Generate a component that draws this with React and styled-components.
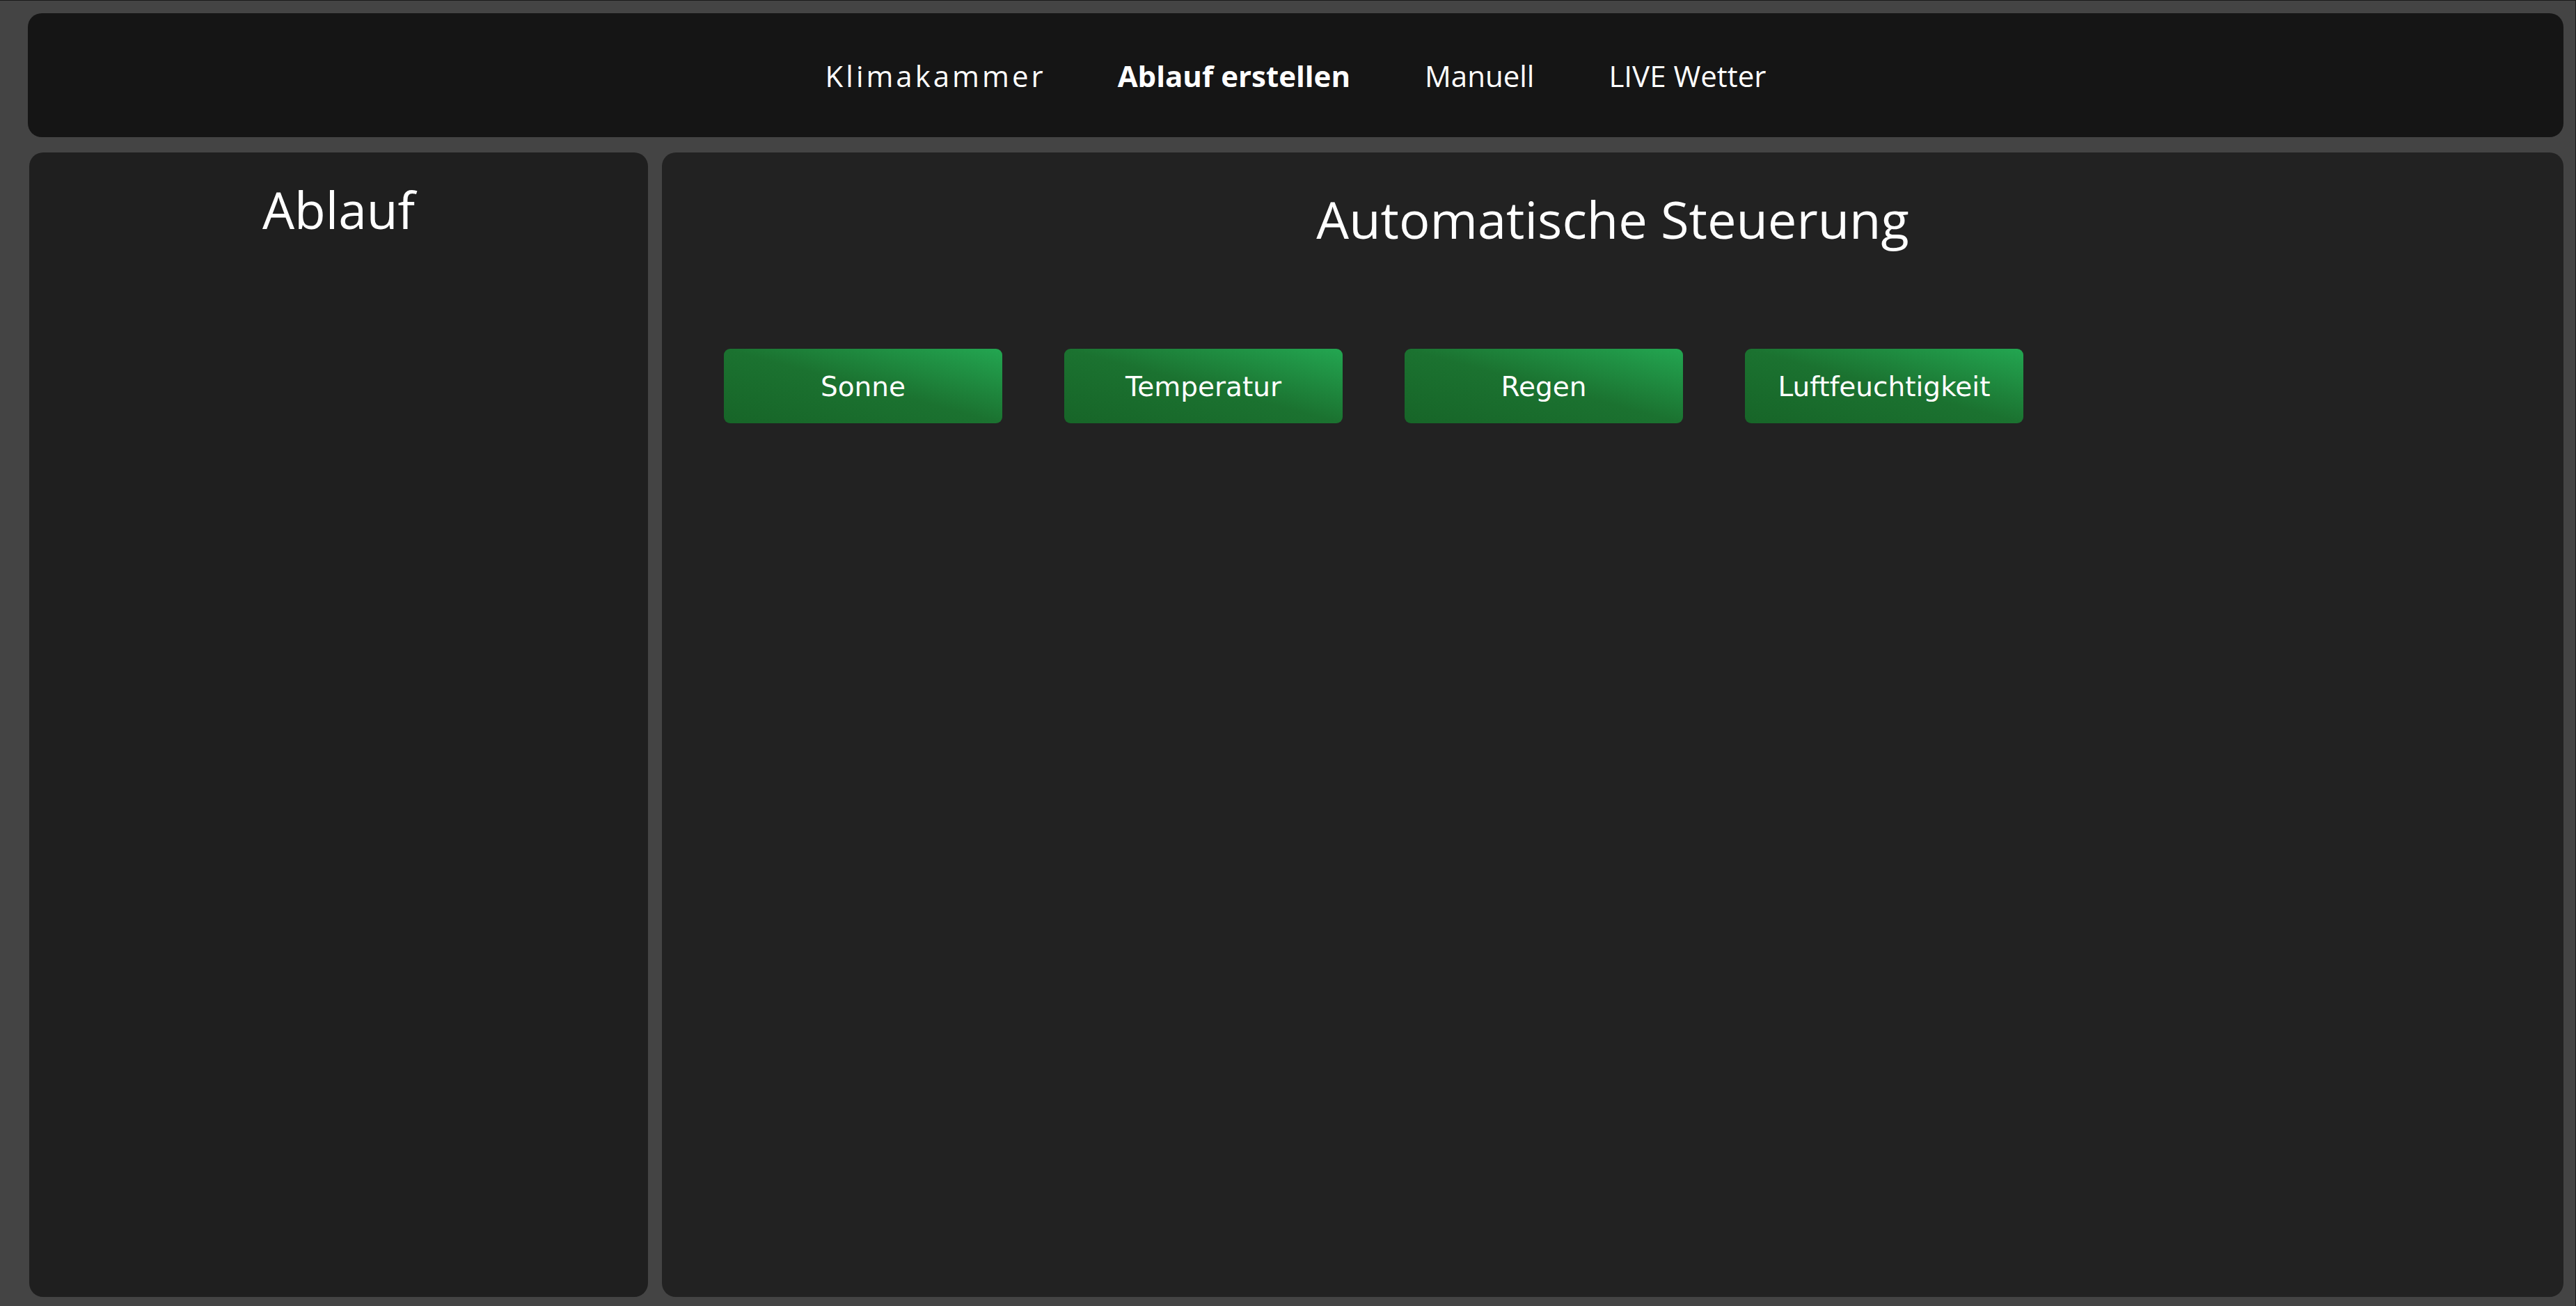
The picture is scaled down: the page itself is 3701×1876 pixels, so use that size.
import React from "react";
import styled, { createGlobalStyle } from "styled-components";

const GlobalStyle = createGlobalStyle`
  *, *::before, *::after { box-sizing: border-box; }
  html, body { margin: 0; padding: 0; background: #444444; }
  body { font-family: "Open Sans", "Noto Sans", sans-serif; color: #ffffff; }
`;

const Page = styled.div`
  min-height: 100vh;
  display: flex;
  flex-direction: column;
  background: #444444;
  border-top: 1px solid #1a1a1a;
  border-right: 1px solid #1a1a1a;
  padding: 18px 17px 13px 40px;
`;

const NavBar = styled.nav`
  height: 178px;
  flex: none;
  background: #151515;
  border-radius: 20px;
  display: flex;
  align-items: center;
  justify-content: center;
  gap: 107px;
`;

const NavLink = styled.a`
  font-family: "Open Sans", "Noto Sans", sans-serif;
  font-size: 42px;
  color: #ffffff;
  text-decoration: none;
  cursor: pointer;
  font-weight: ${(p) => (p.$active ? 700 : 400)};
  letter-spacing: ${(p) => (p.$spaced ? "4px" : "0")};
  margin-right: ${(p) => (p.$spaced ? "-4px" : "0")};
`;

const Main = styled.main`
  flex: 1;
  display: flex;
  gap: 20px;
  margin-top: 22px;
  padding-left: 2px;
`;

const SidePanel = styled.section`
  width: 889px;
  flex: none;
  background: #1f1f1f;
  border-radius: 20px;
  padding-top: 32px;
`;

const ContentPanel = styled.section`
  flex: 1;
  background: #222222;
  border-radius: 20px;
  padding: 45px 0 0 89px;
`;

const PanelTitle = styled.h2`
  margin: 0;
  font-family: "Open Sans", "Noto Sans", sans-serif;
  font-weight: 400;
  font-size: ${(p) => (p.$large ? "74px" : "73px")};
  color: #ffffff;
  text-align: center;
  margin-left: ${(p) => (p.$offset ? `-${p.$offset}px` : "0")};
`;

const ButtonRow = styled.div`
  display: flex;
  gap: 89px;
  margin-top: 136px;
`;

const ActionButton = styled.button`
  width: 400px;
  height: 107px;
  border: none;
  border-radius: 9px;
  background: linear-gradient(15deg, #176528 0%, #1b7230 50%, #23a651 100%);
  color: #ffffff;
  font-family: "DejaVu Sans", "Liberation Sans", sans-serif;
  font-size: 39px;
  cursor: pointer;
  display: flex;
  align-items: center;
  justify-content: center;
  padding: 2px 0 0;
`;

const navItems = [
  { label: "Klimakammer", spaced: true },
  { label: "Ablauf erstellen", active: true },
  { label: "Manuell" },
  { label: "LIVE Wetter" },
];

const actions = ["Sonne", "Temperatur", "Regen", "Luftfeuchtigkeit"];

export default function App() {
  return (
    <>
      <GlobalStyle />
      <Page>
        <NavBar>
          {navItems.map((n) => (
            <NavLink key={n.label} $active={n.active} $spaced={n.spaced}>
              {n.label}
            </NavLink>
          ))}
        </NavBar>
        <Main>
          <SidePanel>
            <PanelTitle>Ablauf</PanelTitle>
          </SidePanel>
          <ContentPanel>
            <PanelTitle $large $offset={89}>Automatische Steuerung</PanelTitle>
            <ButtonRow>
              {actions.map((a) => (
                <ActionButton key={a}>{a}</ActionButton>
              ))}
            </ButtonRow>
          </ContentPanel>
        </Main>
      </Page>
    </>
  );
}
